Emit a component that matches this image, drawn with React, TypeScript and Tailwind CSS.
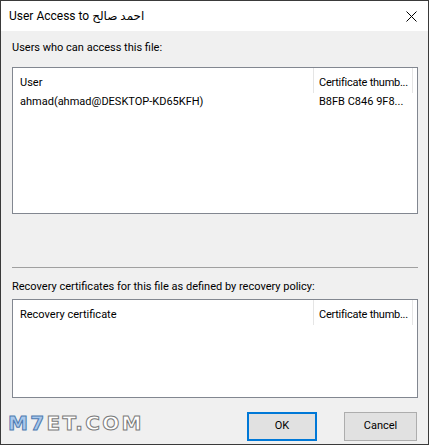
import React from 'react';

const font = { fontFamily: 'Roboto, "DejaVu Sans", sans-serif' };

const ListBox: React.FC<{ header: string; rows?: [string, string][]; className: string }> = ({ header, rows = [], className }) => (
  <div className={`border border-[#828790] bg-white ${className}`}>
    <div className="flex h-[25px] items-center whitespace-nowrap pt-[5px] text-[11px] text-black">
      <div className="w-[300px] pl-[7px]">{header}</div>
      <div className="-mt-[5px] flex h-[25px] w-[100px] items-center overflow-hidden border-x border-[#e5e5e5] pl-[5px] pt-[5px] tracking-[-0.25px]">Certificate thumb...</div>
    </div>
    {rows.map(([user, thumb]) => (
      <div key={user} className="flex h-[18px] items-center whitespace-nowrap text-[11px] text-black">
        <div className="w-[300px] pl-[7px]">{user}</div>
        <div className="w-[100px] pl-[6px]">{thumb}</div>
      </div>
    ))}
  </div>
);

export default function App() {
  return (
    <div className="h-[446px] w-[430px] bg-white" style={font}>
      <div className="relative flex h-[445px] w-[429px] flex-col border border-[#3a3a3a] bg-[#f0f0f0]">
        <div className="flex h-[30px] items-center justify-between bg-white pl-[8px] pr-[10px]">
          <span className="text-[12px] text-black">User Access to احمد صالح</span>
          <svg width="11" height="11" viewBox="0 0 11 11" className="mr-[1px]">
            <path d="M0.5 0.5 L10.5 10.5 M10.5 0.5 L0.5 10.5" stroke="#000" strokeWidth="1" />
          </svg>
        </div>

        <div className="flex flex-1 flex-col pl-[11px] pr-[10px]">
          <div className="mt-[9px] h-[16px] text-[11px] leading-[16px] text-black">Users who can access this file:</div>
          <ListBox
            className="mt-[11px] h-[147px]"
            header="User"
            rows={[['ahmad(ahmad@DESKTOP-KD65KFH)', 'B8FB C846 9F8...']]}
          />
          <div className="mt-[53px] h-px bg-[#a0a0a0]" />
          <div className="mt-[11px] h-[16px] text-[11px] leading-[16px] text-black">Recovery certificates for this file as defined by recovery policy:</div>
          <ListBox className="mt-[4px] h-[99px]" header="Recovery certificate" />

          <div className="mt-[14px] flex justify-end gap-[27px] pr-[1px]">
            <button className="h-[29px] w-[70px] border-2 border-[#0078d7] bg-[#e1e1e1] text-[11px] text-black">OK</button>
            <button className="h-[29px] w-[73px] border border-[#adadad] bg-[#e1e1e1] text-[11px] text-black">Cancel</button>
          </div>
        </div>

        <div
          className="absolute bottom-[6px] left-[7px] text-[20px] font-bold tracking-[2.3px] text-white [-webkit-text-stroke:1px_#7a7a7a]"
          style={{ fontFamily: '"DejaVu Sans", sans-serif' }}
        >
          <span className="text-[#a8c8ec] [-webkit-text-stroke:1px_#4f7bb0]">M7</span>ET.COM
        </div>
      </div>
    </div>
  );
}
